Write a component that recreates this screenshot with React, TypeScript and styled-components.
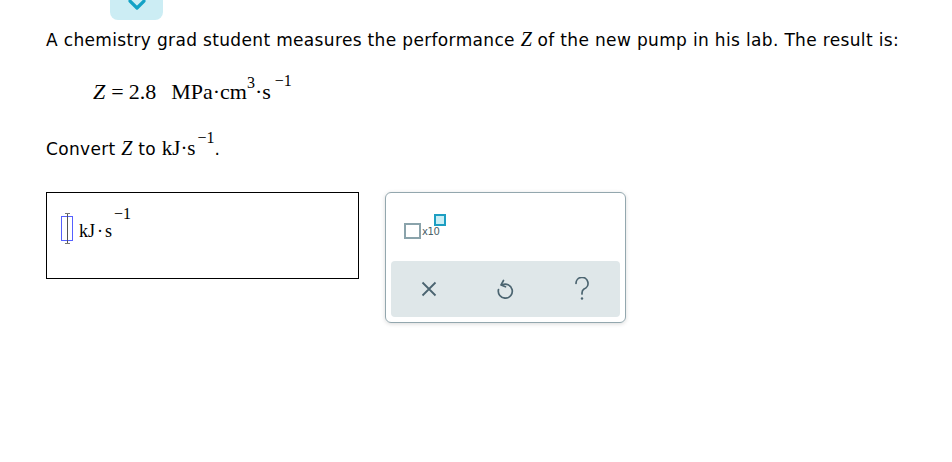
import React from "react";
import styled, { createGlobalStyle } from "styled-components";

const Global = createGlobalStyle`
  html, body { margin: 0; padding: 0; background: #fff; }
  body { font-family: "DejaVu Sans", Verdana, sans-serif; font-size: 17px; color: #000; }
`;

const Page = styled.div`
  width: 952px;
  height: 462px;
  overflow: hidden;
`;

const Tab = styled.div`
  margin-left: 110px;
  width: 53px;
  height: 20px;
  background: #ccedf4;
  border-radius: 0 0 8px 8px;
  display: flex;
  justify-content: center;
  align-items: flex-start;
`;

const Content = styled.div`
  padding-left: 46px;
`;

const Para = styled.p`
  margin: 9px 0 0 0;
  font-size: 17px;
  line-height: 20px;
  letter-spacing: 0.34px;
  white-space: nowrap;
`;

const MathI = styled.span<{ size?: number; gap?: number }>`
  font-family: "Liberation Serif", "Times New Roman", serif;
  font-style: italic;
  font-size: ${(p) => p.size ?? 20}px;
  letter-spacing: 0;
  margin-right: ${(p) => p.gap ?? 0}px;
`;

const MathR = styled.span<{ size?: number; gap?: number; left?: number }>`
  font-family: "Liberation Serif", "Times New Roman", serif;
  font-size: ${(p) => p.size ?? 22}px;
  letter-spacing: 0;
  margin-right: ${(p) => p.gap ?? 0}px;
  margin-left: ${(p) => p.left ?? 0}px;
`;

const Sup = styled.sup<{ size?: number; raise?: number; left?: number }>`
  font-family: "Liberation Serif", "Times New Roman", serif;
  font-size: ${(p) => p.size ?? 16}px;
  vertical-align: ${(p) => p.raise ?? 9}px;
  margin-left: ${(p) => p.left ?? 0}px;
  letter-spacing: 0;
  line-height: 0;
`;

const Equation = styled.div`
  margin: 29px 0 0 47px;
  height: 26px;
  line-height: 26px;
  white-space: nowrap;
`;

const Convert = styled.p`
  margin: 31px 0 0 0;
  line-height: 24px;
  letter-spacing: 0.34px;
  white-space: nowrap;
`;

const Row = styled.div`
  display: flex;
  align-items: flex-start;
  gap: 26px;
  margin-top: 31px;
`;

const AnswerBox = styled.div`
  width: 313px;
  height: 87px;
  border: 1px solid #000;
  padding: 23px 0 0 14px;
  box-sizing: border-box;
  display: flex;
  align-items: flex-start;
`;

const Cursor = styled.div`
  position: relative;
  width: 10px;
  height: 23px;
  border: 1.5px solid #5560ff;
  box-sizing: content-box;
  flex: none;
`;

const CursorLine = styled.div`
  position: absolute;
  left: 4.5px;
  top: -4px;
  bottom: -4px;
  width: 1px;
  background: #555;
`;

const CursorCap = styled.div<{ bottom?: boolean }>`
  position: absolute;
  left: 2.5px;
  width: 5px;
  height: 1px;
  background: #777;
  ${(p) => (p.bottom ? "bottom: -4px;" : "top: -4px;")}
`;

const UnitBase = styled.span`
  font-family: "Liberation Serif", "Times New Roman", serif;
  font-size: 18px;
  line-height: 18px;
  margin: 6px 0 0 6px;
  white-space: nowrap;
`;

const Dot = styled.span`
  margin: 0 2px;
`;

const UnitExp = styled.span`
  font-family: "Liberation Serif", "Times New Roman", serif;
  font-size: 16px;
  line-height: 15px;
  margin: -10px 0 0 2px;
  white-space: nowrap;
`;

const Keypad = styled.div`
  width: 241px;
  height: 131px;
  box-sizing: border-box;
  border: 1px solid #93a7ae;
  border-radius: 6px;
  box-shadow: 0 1px 4px rgba(0, 0, 0, 0.15);
  padding: 0 5px 5px 5px;
  display: flex;
  flex-direction: column;
  justify-content: space-between;
`;

const KeyRow = styled.div`
  height: 67px;
  display: flex;
  align-items: flex-start;
  padding: 21px 0 0 13px;
  box-sizing: border-box;
`;

const SciKey = styled.div`
  position: relative;
  width: 40px;
  height: 26px;
`;

const BigSquare = styled.div`
  position: absolute;
  left: 0;
  top: 9px;
  width: 13px;
  height: 12px;
  border: 2px solid #8aa3ab;
`;

const SmallSquare = styled.div`
  position: absolute;
  left: 30px;
  top: 0;
  width: 8px;
  height: 8px;
  border: 2px solid #1c9ec2;
  background: #c9eef5;
`;

const X10 = styled.span`
  position: absolute;
  left: 18px;
  top: 12px;
  font-family: "DejaVu Sans", Verdana, sans-serif;
  font-size: 10px;
  color: #4a5f67;
  letter-spacing: -0.4px;
`;

const ActionBar = styled.div`
  height: 56px;
  background: #dfe7e9;
  border-radius: 4px;
  display: grid;
  grid-template-columns: repeat(3, 1fr);
  align-items: center;
  justify-items: center;
`;

const IconBtn = styled.div`
  display: flex;
  align-items: center;
  justify-content: center;
  color: #4b6470;
  width: 24px;
  height: 24px;
`;

export default function App() {
  return (
    <Page>
      <Global />
      <Tab>
        <svg width="18" height="11" viewBox="0 0 18 11">
          <path d="M2 1 L9 8 L16 1" fill="none" stroke="#13a2c6" strokeWidth="3.2" strokeLinecap="round" strokeLinejoin="round" />
        </svg>
      </Tab>
      <Content>
        <Para>
          A chemistry grad student measures the performance <MathI>Z</MathI> of the new pump in his lab. The result is:
        </Para>
        <Equation>
          <MathI size={22} gap={6}>Z</MathI>
          <MathR gap={5}>=</MathR>
          <MathR gap={15}>2.8</MathR>
          <MathR>MPa·cm</MathR>
          <Sup raise={11}>3</Sup>
          <MathR>·s</MathR>
          <Sup raise={13} left={4}>&minus;1</Sup>
        </Equation>
        <Convert>
          Convert <MathI>Z</MathI> to <MathR size={21}>kJ·s</MathR>
          <Sup raise={12} left={2}>&minus;1</Sup>.
        </Convert>
        <Row>
          <AnswerBox>
            <Cursor>
              <CursorLine />
              <CursorCap />
              <CursorCap bottom />
            </Cursor>
            <UnitBase>
              kJ<Dot>·</Dot>s
            </UnitBase>
            <UnitExp>&minus;1</UnitExp>
          </AnswerBox>
          <Keypad>
            <KeyRow>
              <SciKey>
                <BigSquare />
                <X10>x10</X10>
                <SmallSquare />
              </SciKey>
            </KeyRow>
            <ActionBar>
              <IconBtn>
                <svg width="16" height="16" viewBox="0 0 16 16">
                  <path d="M1.5 1.5 L14.5 14.5 M14.5 1.5 L1.5 14.5" stroke="currentColor" strokeWidth="1.8" fill="none" />
                </svg>
              </IconBtn>
              <IconBtn>
                <svg width="18" height="20" viewBox="0 0 18 20">
                  <path d="M6 6 A7 7 0 1 1 2.5 10.5" fill="none" stroke="currentColor" strokeWidth="1.7" strokeLinecap="round" />
                  <path d="M7.5 1.5 L5 6 L9.5 7.8" fill="none" stroke="currentColor" strokeWidth="1.7" strokeLinecap="round" strokeLinejoin="round" />
                </svg>
              </IconBtn>
              <IconBtn>
                <svg width="16" height="24" viewBox="0 0 16 24">
                  <path d="M2 6.5 A6 6 0 1 1 10 12 C8.5 13 8 14 8 16 V17" fill="none" stroke="currentColor" strokeWidth="1.7" strokeLinecap="round" />
                  <circle cx="8" cy="21.5" r="1.2" fill="currentColor" />
                </svg>
              </IconBtn>
            </ActionBar>
          </Keypad>
        </Row>
      </Content>
    </Page>
  );
}
